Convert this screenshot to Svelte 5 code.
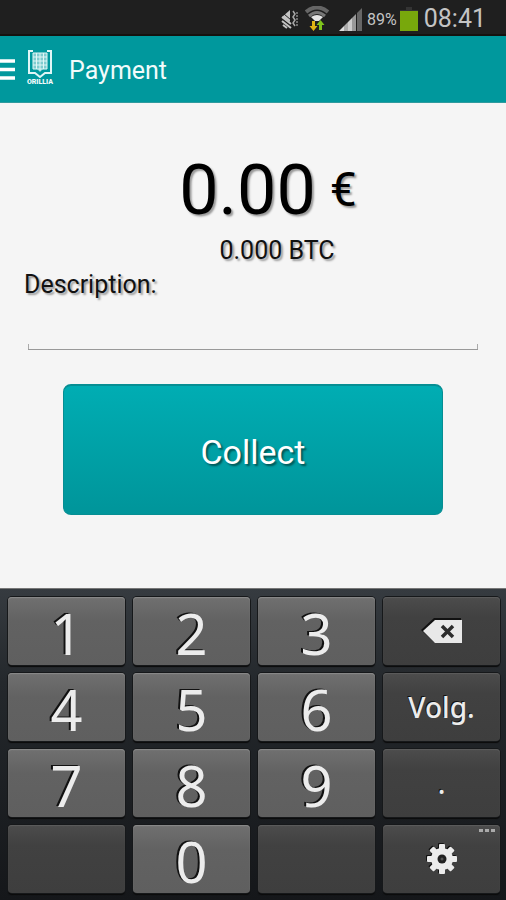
<script lang="ts">
	type Key = { id: string; kind: 'digit' | 'action' | 'blank'; label?: string };

	const keys: Key[] = [
		{ id: '1', kind: 'digit' },
		{ id: '2', kind: 'digit' },
		{ id: '3', kind: 'digit' },
		{ id: 'delete', kind: 'action', label: 'Delete' },
		{ id: '4', kind: 'digit' },
		{ id: '5', kind: 'digit' },
		{ id: '6', kind: 'digit' },
		{ id: 'next', kind: 'action' },
		{ id: '7', kind: 'digit' },
		{ id: '8', kind: 'digit' },
		{ id: '9', kind: 'digit' },
		{ id: 'dot', kind: 'action' },
		{ id: 'blank-left', kind: 'blank' },
		{ id: '0', kind: 'digit' },
		{ id: 'blank-right', kind: 'blank' },
		{ id: 'settings', kind: 'action', label: 'Settings' }
	];

	const teeth = [0, 45, 90, 135, 180, 225, 270, 315];

	let cents = $state(0);
	let description = $state('');
	let amount = $derived((cents / 100).toFixed(2));

	function press(key: Key) {
		if (key.kind === 'digit' && cents < 100000) {
			cents = cents * 10 + Number(key.id);
		} else if (key.id === 'delete') {
			cents = Math.floor(cents / 10);
		}
	}
</script>

<div class="screen">
	<div class="status">
		<svg class="vibrate" viewBox="0 0 18 20" aria-hidden="true">
			<path d="M1 8 L9 1 V13 Z" fill="#c4c4c4" />
			<path d="M1 8 L10 15 M1 12 L10 19 M2 16 L6 19" stroke="#c4c4c4" stroke-width="2" />
			<path d="M3 5 L10 11" stroke="#1f1f1f" stroke-width="1" />
			<path d="M12 2 L14 5 L12 8 L14 11 L12 14 L14 17" fill="none" stroke="#a8a8a8" stroke-width="1.5" />
			<path d="M16 3 V17" stroke="#888" stroke-width="1.5" stroke-dasharray="2 1" />
		</svg>
		<svg class="wifi" viewBox="0 0 24 26" aria-hidden="true">
			<path d="M1 6 Q12 -3 23 6" fill="none" stroke="#666" stroke-width="4" />
			<path d="M4 10 Q12 3 20 10" fill="none" stroke="#777" stroke-width="3" />
			<path d="M6 11 Q12 7 18 11 L14 15 H10 Z" fill="#e6e6e6" />
			<path d="M7 15 h3 v5 h2.5 L8.500 25 L4.500 20 H7 Z" fill="#e0b414" />
			<path d="M14 24 h3 v-5 h2.500 L15.500 14 L11.500 19 H14 Z" fill="#7fc41c" />
		</svg>
		<svg class="signal" viewBox="0 0 24 24" aria-hidden="true">
			<path d="M0 24 L5 19 V24 Z" fill="#ddd" />
			<path d="M5 24 V19 L9 15 V24 Z" fill="#aaa" />
			<path d="M9 24 V15 L13 11 V24 Z" fill="#ccc" />
			<path d="M13 24 V11 L17 7 V24 Z" fill="#999" />
			<path d="M18 24 V6 L23 1 V24 Z" fill="#666" />
		</svg>
		<span class="percent">89%</span>
		<svg class="battery" viewBox="0 0 18 24" aria-hidden="true">
			<path d="M6 0 H12 V3 H18 V5 H0 V3 H6 Z" fill="#343434" />
			<path d="M0 4 H18 V24 H0 Z" fill="#78a80c" />
		</svg>
		<span class="clock">08:41</span>
	</div>

	<header>
		<button class="menu" aria-label="Menu">
			<svg viewBox="0 0 15 22" aria-hidden="true">
				<path d="M0 2 H15 M0 10.500 H15 M0 19 H15" stroke="#fff" stroke-width="3.500" />
			</svg>
		</button>
		<div class="logo">
			<svg viewBox="0 0 24 28" aria-hidden="true">
				<path d="M5 1 H1 V23 H7 L12 27 L17 23 H23 V1 H19" fill="none" stroke="#e0f6f6" stroke-width="2" />
				<path d="M5 3 H19 V19 H15 L12 22 L9 19 H5 Z" fill="#7fcccf" />
				<path
					d="M5 3 V19 M8.500 3 V19 M12 3 V21 M15.500 3 V19 M19 3 V19 M5 3 H19 M5 7 H19 M5 11 H19 M5 15 H19 M5 19 H19"
					stroke="#e0f6f6"
					stroke-width="1"
				/>
			</svg>
			<span>ORILLIA</span>
		</div>
		<h1>Payment</h1>
	</header>

	<main>
		<div class="amount">
			<span class="value">{amount}</span>
			<span class="currency">€</span>
		</div>
		<p class="btc">0.000 BTC</p>
		<label for="description">Description:</label>
		<input id="description" type="text" bind:value={description} />
		<button class="collect">Collect</button>
	</main>

	<div class="keypad">
		{#each keys as key (key.id)}
			{#if key.kind === 'blank'}
				<div class="key blank"></div>
			{:else}
				<button class="key {key.kind}" aria-label={key.label} onclick={() => press(key)}>
					{#if key.kind === 'digit'}
						{key.id}
					{:else if key.id === 'delete'}
						<svg class="delete" viewBox="0 0 42 26" aria-hidden="true">
							<path d="M0 12 L13 0 H40 V24 H13 Z" fill="#111" />
							<path d="M2 13 L14 2 H41 V25 H14 Z" fill="#e8e8e8" />
							<path d="M21 8 L32 19 M32 8 L21 19" stroke="#2c2c2c" stroke-width="3.500" />
						</svg>
					{:else if key.id === 'next'}
						Volg.
					{:else if key.id === 'dot'}
						.
					{:else}
						<span class="more" aria-hidden="true"><i></i><i></i><i></i></span>
						<svg class="gear" viewBox="-16 -16 32 32" aria-hidden="true">
							<g fill="#111" transform="translate(-1 -1)">
								<circle r="11" />
								{#each teeth as angle}
									<rect x="-3" y="-15" width="6" height="8" rx="1" transform="rotate({angle})" />
								{/each}
							</g>
							<g fill="#ececec">
								<circle r="11" />
								{#each teeth as angle}
									<rect x="-3" y="-15" width="6" height="8" rx="1" transform="rotate({angle})" />
								{/each}
							</g>
							<circle r="4.500" fill="#222" />
							<circle r="1.500" fill="#555" />
						</svg>
					{/if}
				</button>
			{/if}
		{/each}
	</div>
</div>

<style>
	:global(body) {
		margin: 0;
		background: #f5f5f5;
	}

	.screen {
		display: flex;
		flex-direction: column;
		min-height: 100vh;
		font-family: Roboto, 'Liberation Sans', sans-serif;
		color: #111;
	}

	.screen * {
		box-sizing: border-box;
	}

	button {
		border: 0;
		font-family: inherit;
		cursor: pointer;
	}

	.status {
		display: flex;
		align-items: center;
		justify-content: flex-end;
		height: 36px;
		padding: 4px 20px 0 0;
		background: #1f1f1f;
		border-bottom: 2px solid #15120f;
		color: #c4c4c4;
	}

	.vibrate {
		width: 18px;
		height: 20px;
		margin-right: 6px;
	}

	.wifi {
		width: 24px;
		height: 26px;
		margin-right: 10px;
	}

	.signal {
		width: 24px;
		height: 24px;
		margin-right: 4px;
	}

	.percent {
		margin-right: 3px;
		font-size: 16px;
	}

	.battery {
		width: 18px;
		height: 24px;
		margin-right: 6px;
	}

	.clock {
		font-size: 25px;
		line-height: 32px;
	}

	header {
		display: flex;
		align-items: center;
		height: 67px;
		padding-top: 2px;
		background: #00989d;
		border-bottom: 1px solid #2f9a9e;
		color: #f2fbfb;
	}

	.menu {
		padding: 0;
		background: none;
	}

	.menu svg {
		display: block;
		width: 15px;
		height: 22px;
	}

	.logo {
		display: flex;
		flex-direction: column;
		align-items: center;
		width: 28px;
		margin: 0 15px 4px 11px;
	}

	.logo svg {
		width: 24px;
		height: 28px;
	}

	.logo span {
		font-size: 7px;
		font-weight: 900;
		line-height: 8px;
	}

	h1 {
		margin: 0;
		font-size: 25px;
		font-weight: 400;
	}

	main {
		display: flex;
		flex: 1;
		flex-direction: column;
		padding: 43px 24px;
	}

	.amount {
		display: flex;
		align-items: center;
		justify-content: center;
		gap: 14px;
		padding-left: 30px;
		color: #000;
		line-height: 88px;
		text-shadow: 2px 2px 2px #999;
	}

	.value {
		font-size: 70px;
	}

	.currency {
		font-size: 48px;
	}

	.btc {
		margin: 0;
		padding-left: 48px;
		font-size: 25px;
		line-height: 34px;
		text-align: center;
		text-shadow: 2px 2px 2px #999;
	}

	label {
		font-size: 25px;
		line-height: 34px;
		text-shadow: 2px 2px 2px #999;
	}

	input {
		height: 48px;
		margin: 0 4px;
		padding: 0 8px;
		border: 0;
		border-bottom: 1px solid #999;
		background:
			linear-gradient(#aaa, #aaa) left bottom / 1px 5px no-repeat,
			linear-gradient(#aaa, #aaa) right bottom / 1px 5px no-repeat;
		font: 25px Roboto, sans-serif;
		outline: none;
	}

	.collect {
		align-self: center;
		width: 83%;
		height: 131px;
		margin-top: 34px;
		padding-top: 4px;
		border: 1px solid #068e93;
		border-top-width: 2px;
		border-radius: 8px;
		background: linear-gradient(#00adb3, #00959a);
		color: #fff;
		font-size: 34px;
		text-shadow: 2px 2px 2px #055;
	}

	.keypad {
		display: grid;
		grid-template-columns: repeat(4, 1fr);
		gap: 8px;
		padding: 8px 6px 7px 8px;
		border-top: 1px solid #777;
		background: linear-gradient(#363b40, #24282c 30%, #15171a);
	}

	.key {
		position: relative;
		display: flex;
		align-items: center;
		justify-content: center;
		height: 68px;
		padding: 0;
		border-radius: 4px;
		background: linear-gradient(#4c4c4c, #414141 30%, #3e3e3e);
		box-shadow:
			0 0 0 1px #16181a,
			0 2px 1px #0a0a0a,
			inset 0 1px 1px #5c5c5c;
		color: #ececec;
		font-family: 'Noto Sans', sans-serif;
		text-shadow: -1px -1px 0 #111;
	}

	.digit {
		padding-top: 3px;
		background: linear-gradient(#707070, #626262 35%, #5f5f5f);
		box-shadow:
			0 0 0 1px #16181a,
			0 2px 1px #0a0a0a,
			inset 0 1px 1px #8a8a8a;
		font-size: 56px;
		font-weight: 400;
		line-height: 64px;
		text-shadow: -2px -1px 0 #111;
	}

	.action {
		font-size: 28px;
		font-weight: 500;
	}

	.delete {
		width: 42px;
		height: 26px;
	}

	.gear {
		width: 32px;
		height: 32px;
	}

	.more {
		position: absolute;
		top: 4px;
		right: 5px;
		display: flex;
		gap: 2px;
	}

	.more i {
		width: 4px;
		height: 3px;
		background: #aaa;
	}
</style>
